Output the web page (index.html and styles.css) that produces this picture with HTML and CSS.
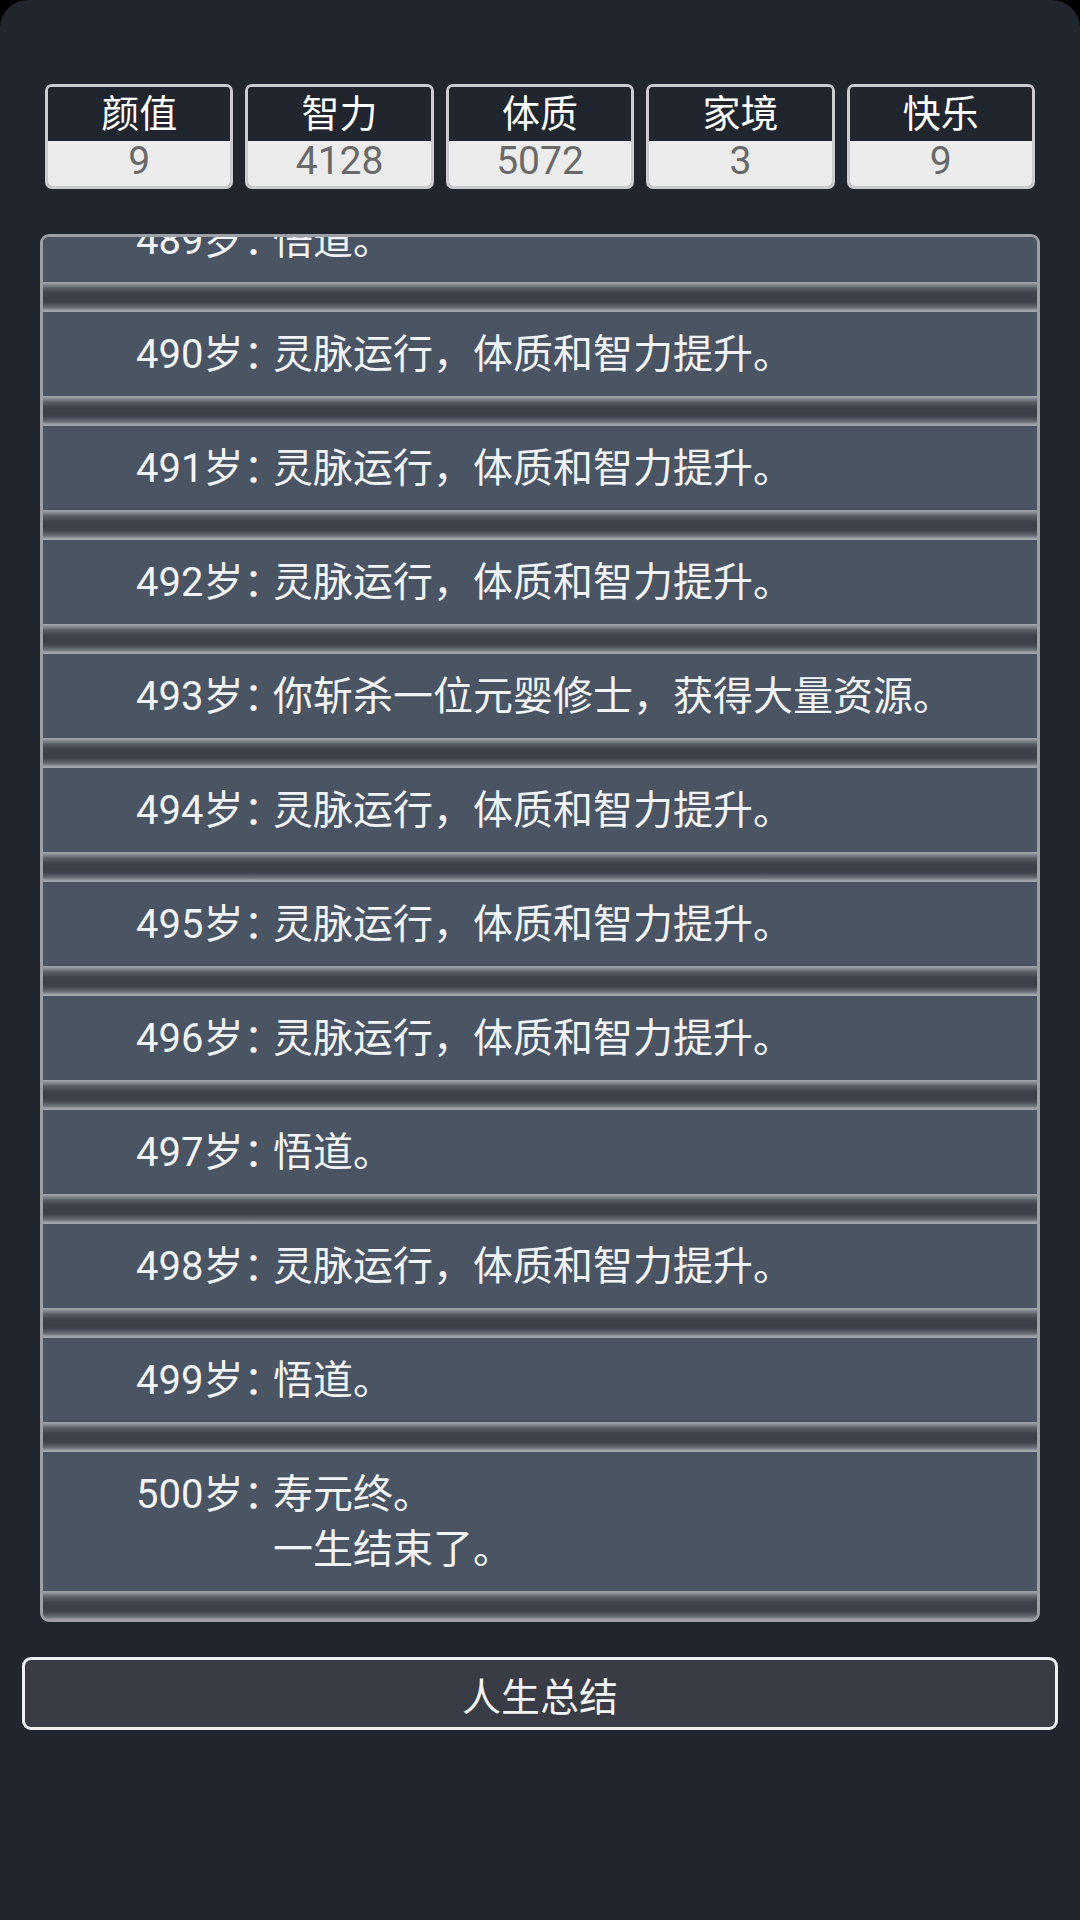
FILE: index.html
```html
<!DOCTYPE html>
<html lang="zh-CN">
<head>
    <meta charset="UTF-8">
    <meta name="viewport" content="width=device-width, initial-scale=1.0">
    <title>人生重开</title>
    <link rel="stylesheet" href="styles.css">
</head>
<body>
    <div class="app">
        <!-- 属性面板 -->
        <div class="stats">
            <div class="stat">
                <div class="stat-name">颜值</div>
                <div class="stat-value">9</div>
            </div>
            <div class="stat">
                <div class="stat-name">智力</div>
                <div class="stat-value">4128</div>
            </div>
            <div class="stat">
                <div class="stat-name">体质</div>
                <div class="stat-value">5072</div>
            </div>
            <div class="stat">
                <div class="stat-name">家境</div>
                <div class="stat-value">3</div>
            </div>
            <div class="stat">
                <div class="stat-name">快乐</div>
                <div class="stat-value">9</div>
            </div>
        </div>

        <!-- 人生记录，滚动到底部 -->
        <div class="log">
            <ul class="events">
                <li class="event">
                    <div class="event-body"><span class="age">489岁：</span><span class="desc">悟道。</span></div>
                </li>
                <li class="event">
                    <div class="event-body"><span class="age">490岁：</span><span class="desc">灵脉运行，体质和智力提升。</span></div>
                </li>
                <li class="event">
                    <div class="event-body"><span class="age">491岁：</span><span class="desc">灵脉运行，体质和智力提升。</span></div>
                </li>
                <li class="event">
                    <div class="event-body"><span class="age">492岁：</span><span class="desc">灵脉运行，体质和智力提升。</span></div>
                </li>
                <li class="event">
                    <div class="event-body"><span class="age">493岁：</span><span class="desc">你斩杀一位元婴修士，获得大量资源。</span></div>
                </li>
                <li class="event">
                    <div class="event-body"><span class="age">494岁：</span><span class="desc">灵脉运行，体质和智力提升。</span></div>
                </li>
                <li class="event">
                    <div class="event-body"><span class="age">495岁：</span><span class="desc">灵脉运行，体质和智力提升。</span></div>
                </li>
                <li class="event">
                    <div class="event-body"><span class="age">496岁：</span><span class="desc">灵脉运行，体质和智力提升。</span></div>
                </li>
                <li class="event">
                    <div class="event-body"><span class="age">497岁：</span><span class="desc">悟道。</span></div>
                </li>
                <li class="event">
                    <div class="event-body"><span class="age">498岁：</span><span class="desc">灵脉运行，体质和智力提升。</span></div>
                </li>
                <li class="event">
                    <div class="event-body"><span class="age">499岁：</span><span class="desc">悟道。</span></div>
                </li>
                <li class="event">
                    <div class="event-body"><span class="age">500岁：</span><span class="desc">寿元终。<br>一生结束了。</span></div>
                </li>
            </ul>
        </div>

        <button class="summary-btn">人生总结</button>
    </div>
</body>
</html>
```

FILE: styles.css
```css
* {
    margin: 0;
    padding: 0;
    box-sizing: border-box;
}

html {
    background-color: #000;
}

body {
    font-family: Roboto, "Noto Sans CJK SC", sans-serif;
    color: #f2f3f5;
}

.app {
    min-height: 1920px;
    background-color: #21262e;
    border-radius: 28px 28px 0 0;
    padding-top: 84px;
}

/* 属性 */
.stats {
    display: flex;
    gap: 12px;
    margin: 0 45px;
}

.stat {
    flex: 1;
    border: 3px solid #c9cbce;
    border-radius: 7px;
    overflow: hidden;
    text-align: center;
}

.stat-name {
    height: 54px;
    line-height: 54px;
    font-size: 38px;
    color: #fff;
    background-color: #21252d;
}

.stat-value {
    height: 45px;
    line-height: 40px;
    font-size: 39px;
    color: #696969;
    background-color: #ececec;
}

/* 记录 */
.log {
    height: 1388px;
    margin: 45px 40px 0;
    border: 3px solid #9c9fa4;
    border-radius: 9px;
    background-color: #3b3f47;
    overflow: hidden;
    display: flex;
    flex-direction: column;
    justify-content: flex-end;
}

.events {
    list-style: none;
}

.event::after {
    content: '';
    display: block;
    height: 30px;
    background: linear-gradient(to bottom,
        #a3a6ab 0,
        #90949a 2px,
        #5a5e66 6px,
        #40444c 11px,
        #3b3f47 17px,
        #41454d 21px,
        #6d7179 26px,
        #9a9da3 28px,
        #a6a9ae 30px);
}

.event:last-child {
    margin-bottom: -2px;
}

.event-body {
    display: flex;
    padding: 15px 20px 14px 93px;
    line-height: 55px;
    font-size: 40px;
    background-color: #4b5462;
}

.age {
    flex: none;
    width: 137px;
    white-space: nowrap;
}

.desc {
    flex: 1;
}

/* 按钮 */
.summary-btn {
    display: block;
    width: calc(100% - 44px);
    height: 73px;
    margin: 35px 22px 0;
    border: 3px solid #eef0f3;
    border-radius: 9px;
    background-color: #393c45;
    color: #f2f3f5;
    font-family: Roboto, "Noto Sans CJK SC", sans-serif;
    font-size: 39px;
    cursor: pointer;
}
```
